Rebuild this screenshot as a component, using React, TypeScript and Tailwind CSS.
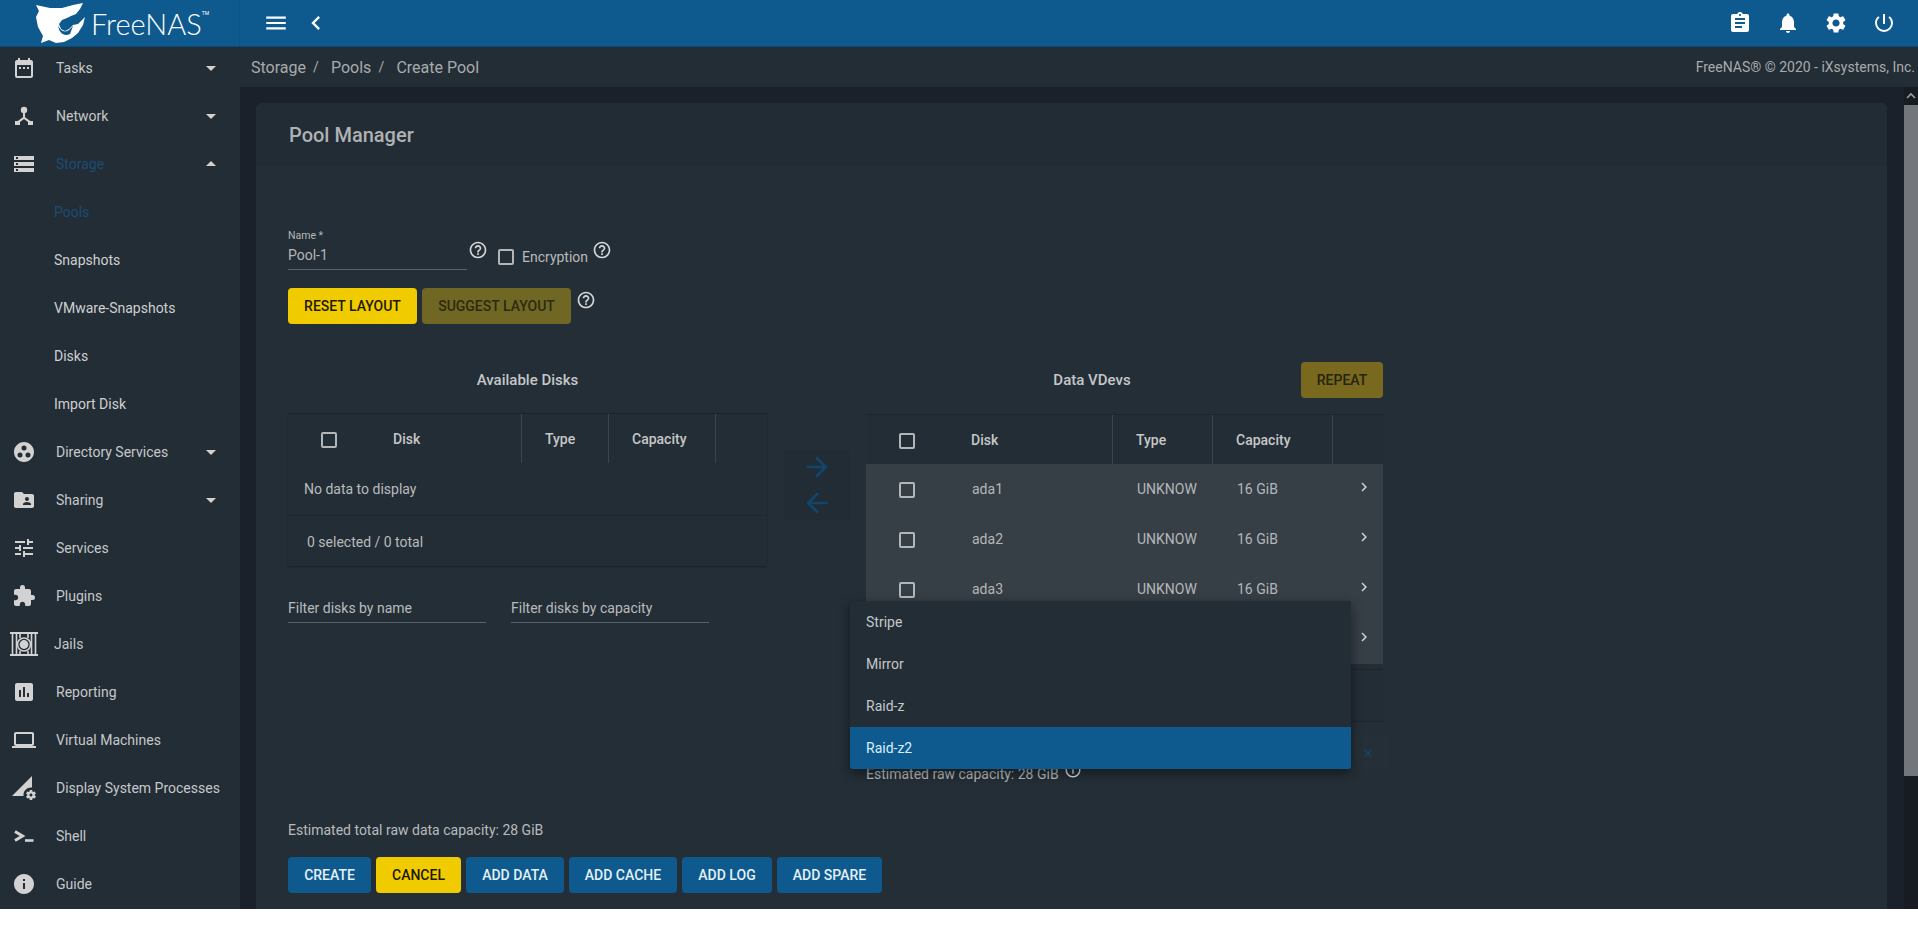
import React from "react";
import {
  MdAssessment, MdAssignment, MdArrowBack, MdArrowDropDown, MdArrowDropUp, MdArrowForward,
  MdChevronLeft, MdChevronRight, MdClose, MdDateRange, MdExtension, MdFolderShared, MdGroupWork,
  MdHelpOutline, MdInfo, MdInfoOutline, MdLaptop, MdMenu, MdNotifications, MdPermDataSetting,
  MdPowerSettingsNew, MdSettings, MdStorage, MdTune,
} from "react-icons/md";

const NetworkIcon = () => (
  <svg width="24" height="24" viewBox="0 0 24 24" fill="currentColor">
    <circle cx="12" cy="6" r="3.2" />
    <path d="M11 9h2v4.2l5 3.6-1.2 1.6-4.8-3.4-4.8 3.4L6 16.8l5-3.6z" />
    <rect x="3" y="17" width="5" height="4" />
    <rect x="16" y="17" width="5" height="4" />
  </svg>
);

const ShellIcon = () => (
  <svg width="24" height="24" viewBox="0 0 24 24" fill="none" stroke="currentColor">
    <path d="M3 7.5 10.5 12 3 16.5" strokeWidth="3" />
    <path d="M13 16.5h8.5" strokeWidth="2.6" />
  </svg>
);

const JailIcon = () => (
  <svg width="28" height="24" viewBox="0 0 28 24" fill="none" stroke="currentColor" className="-mx-[2px]">
    <path d="M0 1h28M0 23h28" strokeWidth="2" />
    <path d="M2.5 2v20M6.5 2v20M21.5 2v20M25.5 2v20M10 2v4M18 2v4M10 19v3M18 19v3" strokeWidth="1.6" />
    <circle cx="14" cy="12.5" r="6.5" strokeWidth="1.6" />
    <circle cx="14" cy="12.5" r="4.4" fill="currentColor" stroke="none" />
  </svg>
);

const Logo = () => (
  <svg width="50" height="40" viewBox="0 0 50 40" className="block">
    <path
      fill="#fff"
      d="M0 2 L14 5 L26 5 L37 2 L47 0 L44 6 L40 11 L35 13 L31 15 L26 17 L23 21 L25 26 L29 28 L33 26 L37 22 L42 21 L49 14 L47 22 L42 30 L36 35 L28 39 L20 40 L13 37 L5 40 L7 33 L2 24 L0 14 L3 8 Z"
    />
    <path fill="#0e5a8f" d="M22 22 C24 28 29 30 33 27 L37 23 L34 31 C28 34 23 30 22 22 Z" />
  </svg>
);

type NavItem = { label: string; icon?: React.ReactNode; caret?: "down" | "up"; active?: boolean; sub?: boolean };

const nav: NavItem[] = [
  { label: "Tasks", icon: <MdDateRange size={24} />, caret: "down" },
  { label: "Network", icon: <NetworkIcon />, caret: "down" },
  { label: "Storage", icon: <MdStorage size={24} />, caret: "up", active: true },
  { label: "Pools", sub: true, active: true },
  { label: "Snapshots", sub: true },
  { label: "VMware-Snapshots", sub: true },
  { label: "Disks", sub: true },
  { label: "Import Disk", sub: true },
  { label: "Directory Services", icon: <MdGroupWork size={24} />, caret: "down" },
  { label: "Sharing", icon: <MdFolderShared size={24} />, caret: "down" },
  { label: "Services", icon: <MdTune size={24} /> },
  { label: "Plugins", icon: <MdExtension size={24} /> },
  { label: "Jails", icon: <JailIcon /> },
  { label: "Reporting", icon: <MdAssessment size={24} /> },
  { label: "Virtual Machines", icon: <MdLaptop size={24} /> },
  { label: "Display System Processes", icon: <MdPermDataSetting size={24} /> },
  { label: "Shell", icon: <ShellIcon /> },
  { label: "Guide", icon: <MdInfo size={24} /> },
];

const Sidebar = () => (
  <aside className="w-[240px] shrink-0 bg-[#232d35] -mt-[3px]">
    {nav.map((n) => (
      <div key={n.label} className="flex h-[48px] items-center pr-[17px]">
        {n.sub ? (
          <span className={`pl-[54px] ${n.active ? "text-[#1b4c74]" : "text-[#cfd0d1]"}`}>{n.label}</span>
        ) : (
          <>
            <span className="ml-3 flex w-[24px] shrink-0 justify-center text-[#d2d2d2]">{n.icon}</span>
            <span className={`${n.label === "Jails" ? "ml-[18px]" : "ml-[20px]"} flex-1 whitespace-nowrap ${n.active ? "text-[#1b4c74]" : "text-[#c6c8ca]"}`}>
              {n.label}
            </span>
          </>
        )}
        {n.caret === "down" && <MdArrowDropDown size={24} className="text-[#d2d2d2]" />}
        {n.caret === "up" && <MdArrowDropUp size={24} className="text-[#d2d2d2]" />}
      </div>
    ))}
  </aside>
);

const Checkbox = () => <span className="block h-[16px] w-[16px] rounded-[2px] border-2 border-[#b3b6b8]" />;

const Help = () => <MdHelpOutline size={20} className="text-[#d5d6d7]" />;

const Btn = ({ label, kind, w }: { label: string; kind: "yellow" | "olive" | "blue" | "oliveLight"; w: string }) => {
  const tone = {
    yellow: "bg-[#f0cb00] text-[#1f1a00]",
    olive: "bg-[#6f6723] text-[#2c2a10]",
    oliveLight: "bg-[#78691f] text-[#26240c]",
    blue: "bg-[#0e5a8f] text-[#e4f0f7]",
  }[kind];
  return (
    <button className={`flex h-[36px] items-center justify-center rounded-[4px] text-[14px] font-medium ${tone} ${w}`}>{label}</button>
  );
};

const HeadCell = ({ label, w, first }: { label: string; w: string; first?: boolean }) => (
  <div className={`flex h-full items-center border-r border-[#3c454c] pt-[2px] font-medium text-[#c5c7c9] ${w} ${first ? "" : "pl-[23px]"}`}>
    {first && (
      <span className="ml-[33px] mr-[56px]">
        <Checkbox />
      </span>
    )}
    {label}
  </div>
);

const Row = ({ name, widths }: { name: string; widths: string[] }) => (
  <div className="relative flex h-[50px] items-center bg-[#363e46] text-[#b4b7b9]">
    <div className={`flex items-center ${widths[0]}`}>
      <span className="ml-[33px] mr-[57px] pt-[2px]">
        <Checkbox />
      </span>
      {name}
    </div>
    <div className={`pl-[25px] ${widths[1]}`}>UNKNOW</div>
    <div className={`pl-[25px] ${widths[2]}`}>16 GiB</div>
    <div className="flex flex-1 justify-end pr-[10px] pb-[4px]">
      <MdChevronRight size={18} className="text-[#cfd0d1]" />
    </div>
  </div>
);

const Field = ({ label, w }: { label: string; w: string }) => (
  <div className={`h-[27px] border-b border-[#59626a] leading-[24px] text-[#b9bbbd] ${w}`}>{label}</div>
);

const rightW = ["w-[246px]", "w-[100px]", "w-[120px]"];

const Card = () => (
  <section className="mx-[16px] mr-[17px] mt-[16px] flex-1 rounded-t-[6px] bg-[#242e36]">
    <header className="flex h-[63px] items-center rounded-t-[6px] bg-[#222c34] pl-[33px] pt-[1px] text-[20px] font-medium text-[#afb2b4]">
      Pool Manager
    </header>
    <div className="px-[32px]">
      <div className="mt-[63px] flex items-start">
        <div className="h-[41px] w-[179px] border-b border-[#59626a]">
          <div className="h-[13px] text-[10.5px] leading-[13px] text-[#b4b7b9]">Name *</div>
          <div className="mt-[5px] leading-[16px] text-[#b4b7b9]">Pool-1</div>
        </div>
        <span className="ml-[1px] mt-[11px]">
          <Help />
        </span>
        <span className="ml-[10px] mt-[20px]">
          <Checkbox />
        </span>
        <span className="ml-[8px] mt-[20px] leading-[16px] text-[#b9bbbd]">Encryption</span>
        <span className="ml-[4px] mt-[11px]">
          <Help />
        </span>
      </div>

      <div className="mt-[18px] flex items-start">
        <Btn label="RESET LAYOUT" kind="yellow" w="w-[129px]" />
        <span className="ml-[5px]">
          <Btn label="SUGGEST LAYOUT" kind="olive" w="w-[149px]" />
        </span>
        <span className="ml-[5px] mt-[2px]">
          <Help />
        </span>
      </div>

      <div className="mt-[38px] flex items-start">
        <div className="w-[479px]">
          <div className="flex h-[36px] items-center justify-center text-[15px] font-medium text-[#c5c7c9]">Available Disks</div>
          <div className="mt-[15px] border-t border-[#1d252c] bg-[#232d35] shadow-[0_1px_2px_rgba(0,0,0,0.25)]">
            <div className="flex h-[49px] items-center">
              <HeadCell label="Disk" w="w-[234px]" first />
              <HeadCell label="Type" w="w-[87px]" />
              <HeadCell label="Capacity" w="w-[107px]" />
            </div>
            <div className="flex h-[53px] items-center border-b border-[#1f282f] pl-[16px] text-[#b9bbbd]">No data to display</div>
            <div className="flex h-[50px] items-center pl-[19px] pt-[2px] text-[#b9bbbd]">0 selected / 0 total</div>
          </div>
          <div className="mt-[30px] flex gap-[25px]">
            <Field label="Filter disks by name" w="w-[198px]" />
            <Field label="Filter disks by capacity" w="w-[198px]" />
          </div>
        </div>

        <div className="ml-[17px] mt-[88px] flex h-[70px] w-[66px] flex-col items-center justify-center gap-[4px] bg-[#222c34] text-[#10466c]">
          <MdArrowForward size={32} />
          <MdArrowBack size={32} />
        </div>

        <div className="relative ml-[16px] w-[517px]">
          <div className="relative flex h-[36px] items-center justify-center pr-[65px] text-[15px] font-medium text-[#c5c7c9]">
            Data VDevs
            <span className="absolute right-0 top-0">
              <Btn label="REPEAT" kind="oliveLight" w="w-[82px]" />
            </span>
          </div>
          <div className="mt-[16px] border-t border-[#1d252c] bg-[#232d35]">
            <div className="flex h-[49px] items-center">
              <HeadCell label="Disk" w="w-[247px]" first />
              <HeadCell label="Type" w="w-[100px]" />
              <HeadCell label="Capacity" w="w-[120px]" />
            </div>
            <Row name="ada1" widths={rightW} />
            <Row name="ada2" widths={rightW} />
            <Row name="ada3" widths={rightW} />
            <Row name="ada4" widths={rightW} />
            <div className="mt-[5px] h-[53px] border-y border-[#1d252c]" />
          </div>
          <div className="flex items-start">
            <div className="mt-[44px] flex items-center leading-[16px] text-[#b4b7b9]">
              Estimated raw capacity: 28 GiB
              <MdInfoOutline size={18} className="ml-[5px] -mt-[8px] text-[#d5d6d7]" />
            </div>
            <div className="ml-auto mt-[13px] mr-[-5px] flex h-[35px] w-[40px] items-center justify-center bg-[#252f37] text-[#134a72]">
              <MdClose size={14} />
            </div>
          </div>

          <div className="absolute left-[-16px] top-[239px] w-[501px] overflow-hidden rounded-[3px] bg-[#232d35] text-[#c5c7c9] shadow-[0_4px_12px_rgba(0,0,0,0.45)]">
            <div className="flex h-[42px] items-center pl-[16px]">Stripe</div>
            <div className="flex h-[42px] items-center pl-[16px]">Mirror</div>
            <div className="flex h-[42px] items-center pl-[16px]">Raid-z</div>
            <div className="flex h-[42px] items-center bg-[#0e5a8f] pl-[16px] text-[#d8eefb]">Raid-z2</div>
          </div>
        </div>
      </div>

      <div className="mt-[40px] leading-[16px] text-[#b9bbbd]">Estimated total raw data capacity: 28 GiB</div>
      <div className="mt-[19px] flex gap-[5px]">
        <Btn label="CREATE" kind="blue" w="w-[83px]" />
        <Btn label="CANCEL" kind="yellow" w="w-[85px]" />
        <Btn label="ADD DATA" kind="blue" w="w-[98px]" />
        <Btn label="ADD CACHE" kind="blue" w="w-[108px]" />
        <Btn label="ADD LOG" kind="blue" w="w-[90px]" />
        <Btn label="ADD SPARE" kind="blue" w="w-[105px]" />
      </div>
    </div>
  </section>
);

export default function App() {
  return (
    <div className="h-[936px] overflow-hidden bg-white text-[14px] font-['Roboto',sans-serif]">
      <div className="flex h-[909px] flex-col overflow-hidden">
        <header className="relative z-10 flex h-[47px] shrink-0 items-center border-b border-[#0b4a77] bg-[#0e5a8f] text-white">
          <div className="flex h-full w-[240px] shrink-0 items-center border-r border-[#0d5484] pl-[36px]">
            <Logo />
            <span className="ml-[5px] font-['Lato',sans-serif] text-[29px] font-light leading-none">FreeNAS</span>
            <span className="mb-[20px] text-[5px] leading-none">TM</span>
          </div>
          <button className="ml-[23px]">
            <MdMenu size={26} className="block" />
          </button>
          <button className="ml-[13px]">
            <MdChevronLeft size={28} className="block" />
          </button>
          <div className="ml-auto mr-[22px] flex gap-[24px]">
            <MdAssignment size={24} />
            <MdNotifications size={24} />
            <MdSettings size={24} />
            <MdPowerSettingsNew size={24} />
          </div>
        </header>

        <div className="flex min-h-0 flex-1">
          <Sidebar />
          <main className="flex min-w-0 flex-1 flex-col">
            <div className="flex h-[40px] shrink-0 items-center bg-[#232d35] pl-[11px] pr-[3px] pt-[1px] text-[16px] text-[#a8abad]">
              <span>Storage</span>
              <span className="w-[25px] pl-[7px] text-[14px]">/</span>
              <span>Pools</span>
              <span className="w-[25px] pl-[7px] text-[14px]">/</span>
              <span>Create Pool</span>
              <span className="ml-auto text-[14px]">FreeNAS® © 2020 - iXsystems, Inc.</span>
            </div>
            <div className="flex min-h-0 flex-1 bg-[#1a212a]">
              <Card />
              <div className="flex w-[14px] shrink-0 flex-col bg-[#171c22]">
                <div className="flex h-[18px] items-center justify-center text-[#9a9da0]">
                  <svg width="10" height="8" viewBox="0 0 10 8" fill="none" stroke="currentColor" strokeWidth="1.6">
                    <path d="M1 6 5 2l4 4" />
                  </svg>
                </div>
                <div className="h-[671px] bg-[#73777b]" />
              </div>
            </div>
          </main>
        </div>
      </div>
    </div>
  );
}
